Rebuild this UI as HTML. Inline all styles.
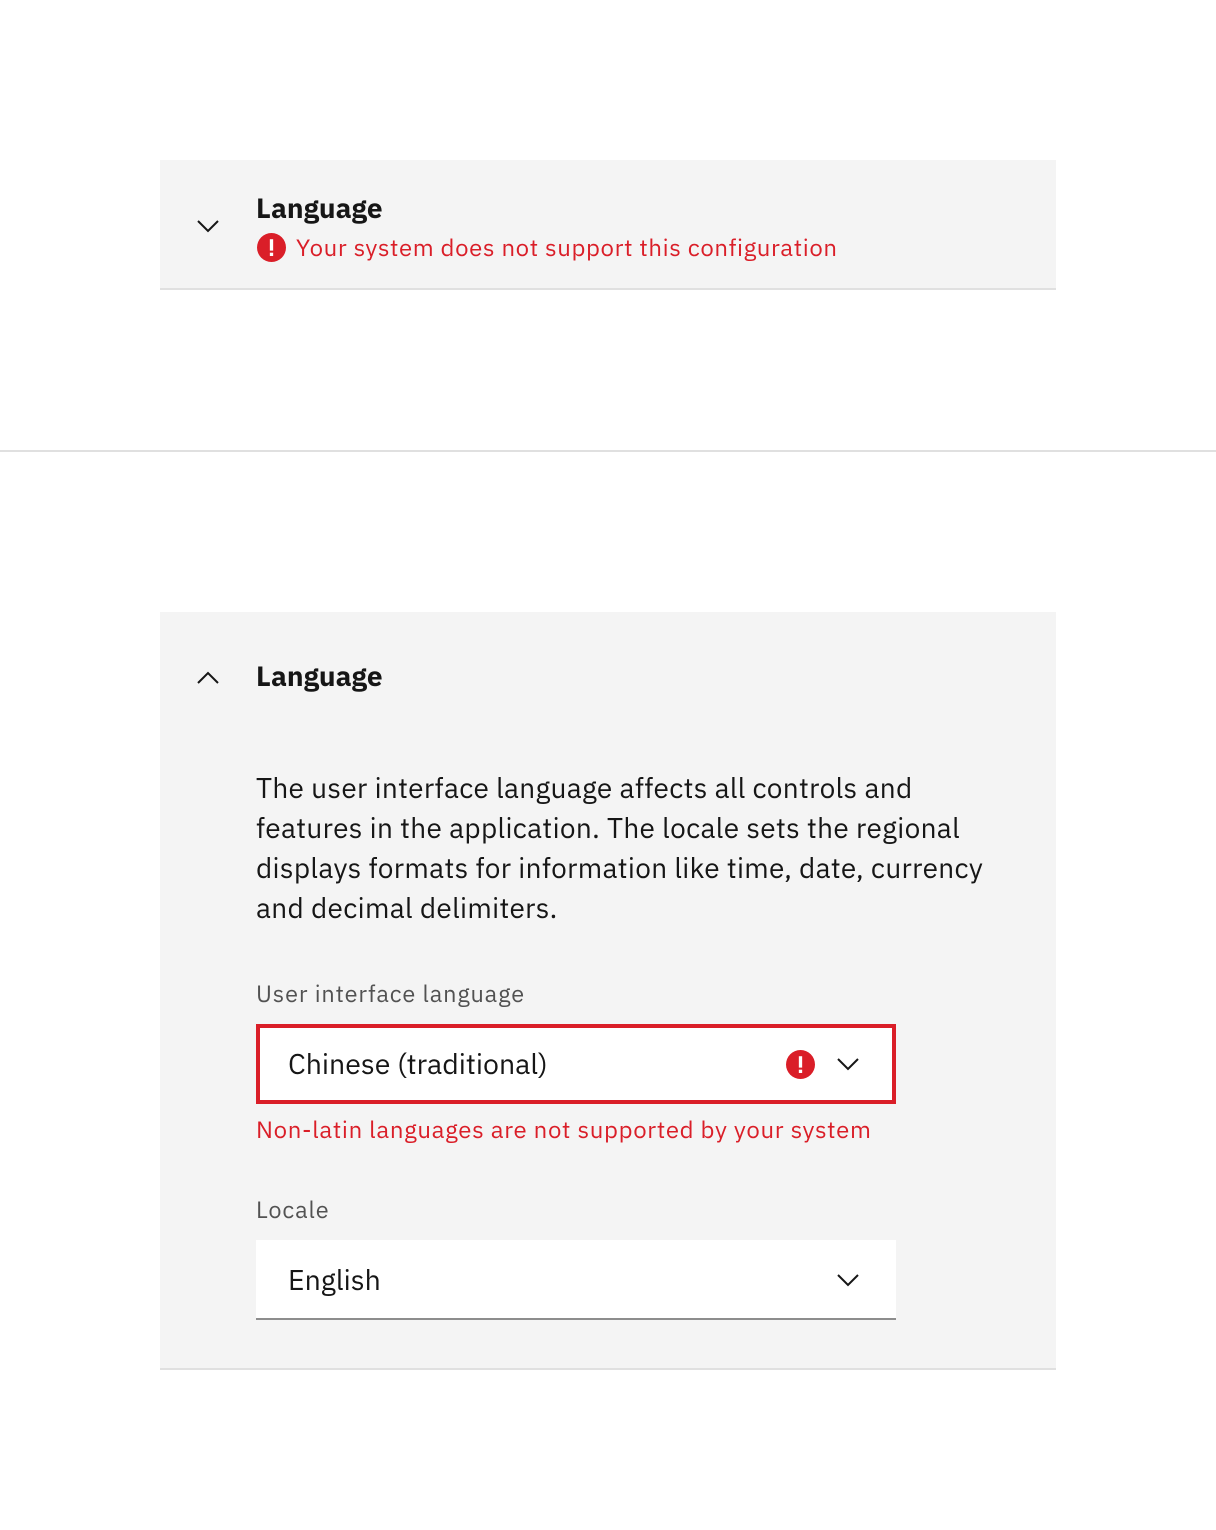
<!DOCTYPE html>
<html><head><meta charset="utf-8"><style>
*{margin:0;padding:0;box-sizing:border-box}
body{width:1216px;height:1530px;background:#fff;position:relative;font-family:"IBM Plex Sans","Liberation Sans",sans-serif;color:#161616;overflow:hidden}
.abs{position:absolute}
.panel{position:absolute;left:160px;width:896px;background:#f4f4f4;border-bottom:2px solid #e0e0e0}
.title{font-weight:bold;font-size:28px;white-space:nowrap}
.red{color:#da1e28}
svg{position:absolute}
</style></head><body>
<div class="panel" style="top:160px;height:130px"></div>
<svg style="left:196px;top:218px" width="24" height="16" viewBox="0 0 24 16"><path d="M2 3 L12 13 L22 3" fill="none" stroke="#161616" stroke-width="2"/></svg>
<div class="abs title" style="left:256px;top:190px;line-height:36px">Language</div>
<svg style="left:257px;top:233px" width="29" height="29" viewBox="0 0 28 28"><circle cx="14" cy="14" r="14" fill="#da1e28"/><rect x="12.4" y="6" width="3.2" height="11" fill="#fff"/><rect x="12.4" y="19" width="3.2" height="3.2" fill="#fff"/></svg>
<div class="abs red" style="left:296px;top:231px;font-size:24px;line-height:32px;white-space:nowrap;letter-spacing:0.6px">Your system does not support this configuration</div>

<div class="abs" style="left:0;top:450px;width:1216px;height:2px;background:#e0e0e0"></div>

<div class="panel" style="top:612px;height:758px"></div>
<svg style="left:196px;top:670px" width="24" height="16" viewBox="0 0 24 16"><path d="M2 13 L12 3 L22 13" fill="none" stroke="#161616" stroke-width="2"/></svg>
<div class="abs title" style="left:256px;top:658px;line-height:36px">Language</div>
<div class="abs" style="left:256px;top:768px;width:780px;font-size:28px;line-height:40px;letter-spacing:0.32px;white-space:nowrap">The user interface language affects all controls and<br>features in the application. The locale sets the regional<br>displays formats for information like time, date, currency<br>and decimal delimiters.</div>
<div class="abs" style="left:256px;top:978px;font-size:23.5px;color:#525252;letter-spacing:0.85px;line-height:32px">User interface language</div>
<div class="abs" style="left:256px;top:1024px;width:640px;height:80px;background:#fff;border:4px solid #da1e28"></div>
<div class="abs" style="left:288px;top:1045px;font-size:28.5px;line-height:38px">Chinese (traditional)</div>
<svg style="left:786px;top:1050px" width="29" height="29" viewBox="0 0 28 28"><circle cx="14" cy="14" r="14" fill="#da1e28"/><rect x="12.4" y="6" width="3.2" height="11" fill="#fff"/><rect x="12.4" y="19" width="3.2" height="3.2" fill="#fff"/></svg>
<svg style="left:836px;top:1056px" width="24" height="16" viewBox="0 0 24 16"><path d="M2 3 L12 13 L22 3" fill="none" stroke="#161616" stroke-width="2"/></svg>
<div class="abs red" style="left:256px;top:1113px;font-size:24px;line-height:32px;white-space:nowrap;letter-spacing:0.65px">Non-latin languages are not supported by your system</div>
<div class="abs" style="left:256px;top:1194px;font-size:23.5px;color:#525252;letter-spacing:0.85px;line-height:32px">Locale</div>
<div class="abs" style="left:256px;top:1240px;width:640px;height:80px;background:#fff;border-bottom:2px solid #8d8d8d"></div>
<div class="abs" style="left:288px;top:1261px;font-size:28.5px;line-height:38px">English</div>
<svg style="left:836px;top:1272px" width="24" height="16" viewBox="0 0 24 16"><path d="M2 3 L12 13 L22 3" fill="none" stroke="#161616" stroke-width="2"/></svg>
</body></html>
